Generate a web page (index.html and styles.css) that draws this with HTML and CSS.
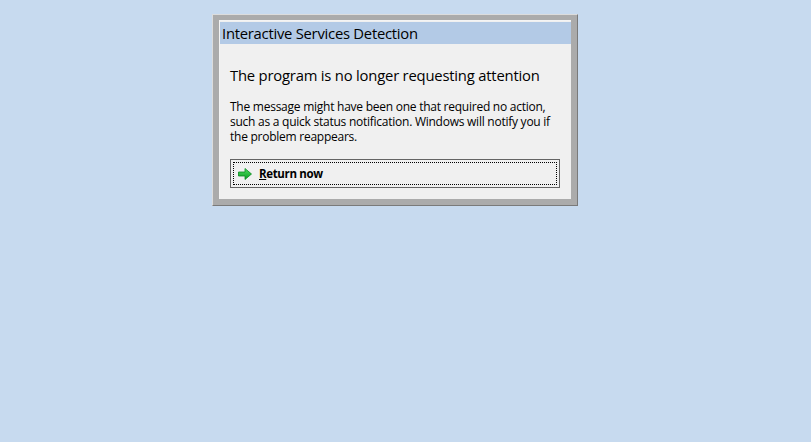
FILE: index.html
```html
<!DOCTYPE html>
<html>
  <head>
    <title>Interactive Services Detection</title>
    <meta name="viewport" content="width=device-width, initial-scale=1" />
    <link rel="stylesheet" href="styles.css">
  </head>
  <body>
    <div class="dialog">
      <div class="frame">
        <div class="client">
          <div class="title-bar">Interactive Services Detection</div>
          <div class="content">
            <h3>The program is no longer requesting attention</h3>
            <p>The message might have been one that required no action, such as a quick status notification. Windows will notify you if the problem reappears.</p>
            <button class="command">
              <span class="focus">
                <svg class="arrow" width="16" height="14" viewBox="0 0 16 14">
                  <defs>
                    <linearGradient id="g" x1="0" y1="0" x2="0" y2="1">
                      <stop offset="0" stop-color="#4fe060"/>
                      <stop offset="1" stop-color="#0a9a22"/>
                    </linearGradient>
                  </defs>
                  <path d="M1.5 5 H8 V1.5 L14.5 7 L8 12.5 V9 H1.5 Z" fill="url(#g)" stroke="#078a1e" stroke-width="0.8" stroke-linejoin="round"/>
                </svg>
                <span class="label"><u>R</u>eturn now</span>
              </span>
            </button>
          </div>
        </div>
      </div>
    </div>
  </body>
</html>
```

FILE: styles.css
```css
* {
  padding: 0;
  margin: 0;
  box-sizing: border-box;
}
body {
  background-color: #c7daef;
  font-family: "Open Sans", "Noto Sans", sans-serif;
  padding: 14px 0 0 212px;
}
.dialog {
  width: 366px;
  height: 192px;
  border-top: 1px solid #dcdcdc;
  border-left: 1px solid #dcdcdc;
  border-right: 1px solid #7a7a7a;
  border-bottom: 1px solid #7a7a7a;
  background-color: #ababab;
}
.frame {
  padding: 5px 6px 6px 6px;
  height: 100%;
}
.client {
  height: 100%;
  background-color: #f0f0f0;
  border-top: 1px solid #f4f4f4;
  border-left: 1px solid #f4f4f4;
}
.title-bar {
  background-color: #b3cae6;
  height: 22px;
  margin-top: 1px;
  padding-left: 2px;
  font-size: 14.8px;
  line-height: 23px;
  color: #000;
  letter-spacing: -0.25px;
}
.content {
  padding: 22px 10px 0 10px;
}
h3 {
  font-weight: 400;
  font-size: 14.8px;
  line-height: 18px;
  letter-spacing: -0.2px;
  color: #000;
}
p {
  margin-top: 15px;
  font-size: 12px;
  line-height: 15px;
  letter-spacing: -0.25px;
  width: 330px;
  color: #000;
}
.command {
  display: block;
  margin-top: 15px;
  width: 330px;
  height: 29px;
  border: 1px solid #646464;
  background-color: #f0f0f0;
  padding: 2px;
  font-family: inherit;
  text-align: left;
}
.focus {
  display: flex;
  align-items: center;
  height: 100%;
  border: 1px dotted #000;
  padding-left: 3px;
}
.arrow {
  display: block;
}
.label {
  margin-left: 6px;
  font-weight: 700;
  font-size: 11.5px;
  letter-spacing: -0.35px;
  color: #000;
}
```
